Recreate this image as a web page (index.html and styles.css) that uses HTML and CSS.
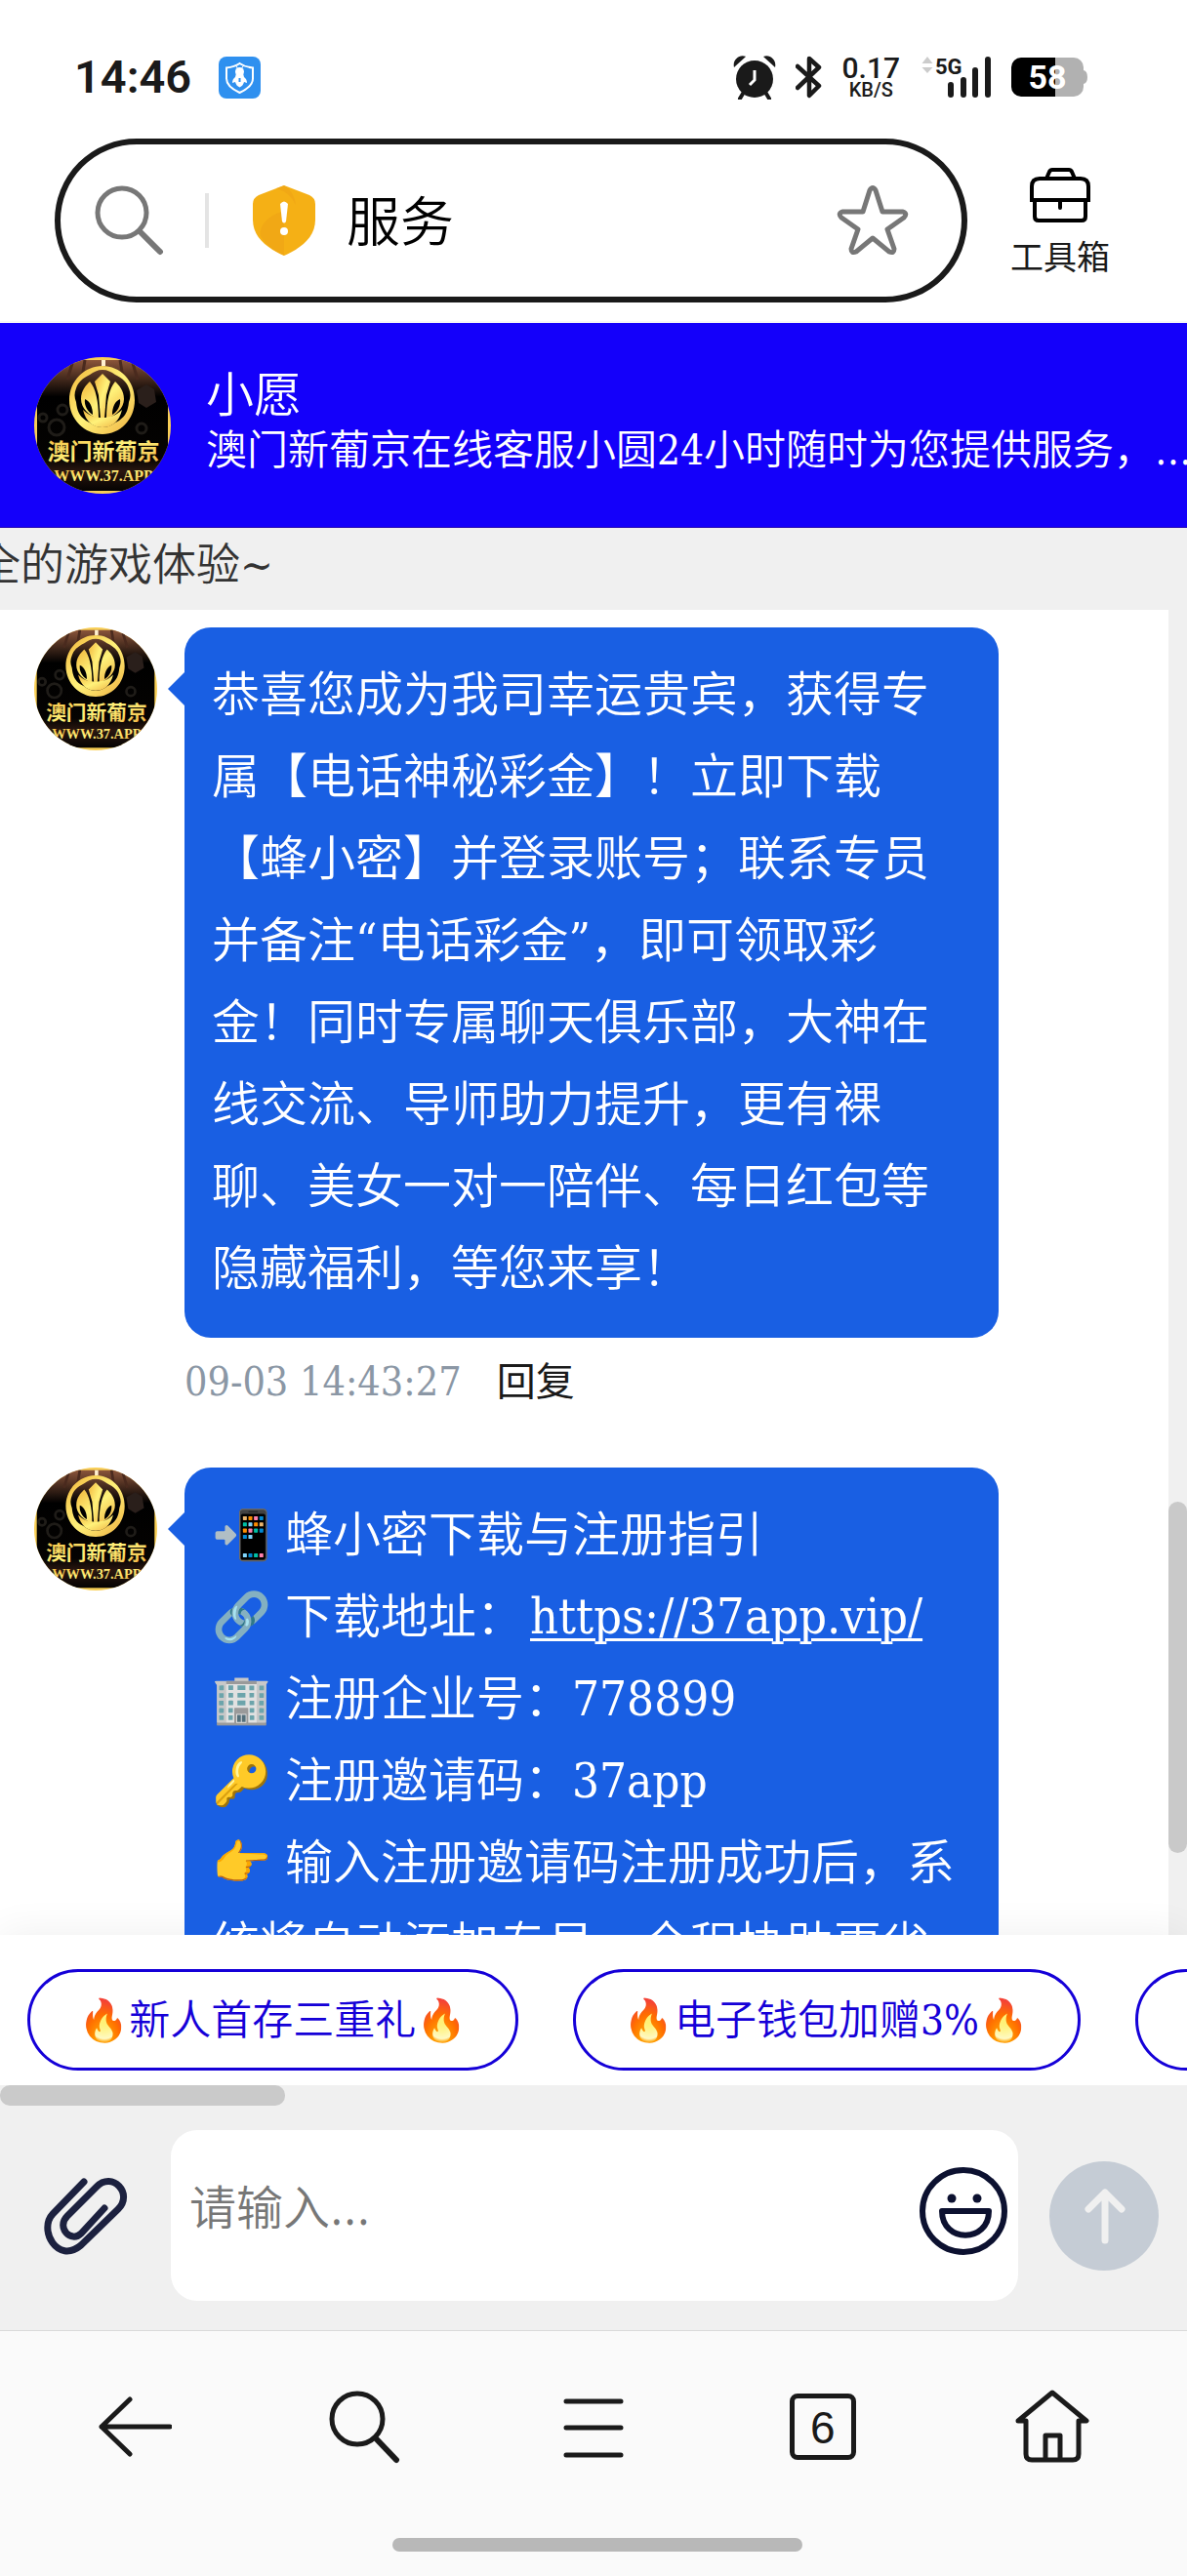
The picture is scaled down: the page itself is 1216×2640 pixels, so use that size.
FILE: index.html
```html
<!DOCTYPE html>
<html lang="zh-CN">
<head>
<meta charset="utf-8">
<meta name="viewport" content="width=device-width, initial-scale=1">
<title>服务</title>
<link rel="stylesheet" href="styles.css">
</head>
<body>
<svg class="sprite" aria-hidden="true">
  <defs>
    <linearGradient id="gold" x1="0" y1="0" x2="1" y2="1">
      <stop offset="0" stop-color="#f2b53a"/><stop offset=".5" stop-color="#fff27a"/><stop offset="1" stop-color="#efb040"/>
    </linearGradient>
    <linearGradient id="curtain" x1="0" y1="0" x2="0" y2="1">
      <stop offset="0" stop-color="#8a543a"/><stop offset=".28" stop-color="#000"/><stop offset=".75" stop-color="#050302"/><stop offset=".85" stop-color="#2a1710"/><stop offset="1" stop-color="#050302"/>
    </linearGradient>
    <clipPath id="disc"><circle cx="70" cy="70" r="70"/></clipPath>
  </defs>
  <symbol id="avatar" viewBox="0 0 140 140">
    <g clip-path="url(#disc)">
      <rect width="140" height="140" fill="#f9cf55"/>
      <rect x="3" y="3" width="134" height="134" fill="url(#curtain)"/>
      <path d="M40 3l-6 20M52 3l-3 18M88 3l3 18M100 3l6 20" stroke="#4a2a1e" stroke-width="3"/>
      <path d="M71 3v6" stroke="#fff0d0" stroke-width="4"/>
      <path d="M105 34l10-6 8 5 2 13-10 6-8-5z" fill="#2a1f1b"/>
      <g fill="none" stroke="#1f1c18" stroke-width="3"><circle cx="29" cy="54" r="5"/><circle cx="23" cy="72" r="8"/><circle cx="9" cy="62" r="4"/><circle cx="110" cy="73" r="5"/></g>
      <path fill-rule="evenodd" d="M70 9C88 9 103 24 103 44S88 79 70 79 36 64 36 44 52 9 70 9zM70 13c-5 0-9 2-13 5-8 4-12 8-14 14-2 5-2 9 0 14 1 9 3 14 10 19 6 3 9 7 17 7s11-4 17-7c7-5 9-10 10-19 2-5 2-9 0-14-2-6-6-10-14-14-4-3-8-5-13-5z" fill="url(#gold)"/>
      <path d="M70 17l8 8-4 14-2 24h-4l-2-24-4-14z" fill="url(#gold)"/>
      <path d="M57 25c6 7 9 20 9 38-10-3-18-11-18-20s5-14 9-18zM83 25c-6 7-9 20-9 38 10-3 18-11 18-20s-5-14-9-18z" fill="url(#gold)"/>
      <path d="M52 43c5 2 8 8 8 16-5-3-9-9-8-16zM88 43c-5 2-8 8-8 16 5-3 9-9 8-16z" fill="#000"/>
      <path d="M50 54c6 6 13 8 20 8s14-2 20-8c-3 12-10 18-20 18s-17-6-20-18z" fill="url(#gold)"/>
      <text x="71" y="105" text-anchor="middle" class="avatar-name" fill="url(#gold)">澳门新葡京</text>
      <text x="71" y="127" text-anchor="middle" class="avatar-site" fill="url(#gold)">WWW.37.APP</text>
    </g>
  </symbol>
</svg>

<div class="phone">
  <div class="status">
    <span class="clock">14:46</span>
    <svg class="app-badge" width="43" height="43" viewBox="0 0 43 43"><rect width="43" height="43" rx="8" fill="#2f90ef"/><path d="M21.500 7c5 3.500 9 4 13.500 4.500v11c0 7-6 11-13.500 14.500C14 33.500 8 29.500 8 22.500v-11C12.500 11 16.500 10.500 21.500 7z" fill="none" stroke="#fff" stroke-width="2"/><path d="M18 10l2 3M25 10l-2 3" stroke="#fff"/><circle cx="21.500" cy="15.500" r="4.500" fill="#fff"/><path d="M18 17h7l1 4q3 2 3 6l-3-1q-1 4-4.500 5.500Q18 30 17 26l-3 1q0-4 3-6z" fill="#fff"/><path d="M21.500 22v4" stroke="#2f90ef" stroke-width="2"/></svg>
    <div class="status-right">
      <svg width="44" height="45" viewBox="0 0 44 45"><g fill="#1a1a1a"><circle cx="22" cy="24" r="19"/><path d="M1 12C-1 4 7-2 13 1zM43 12c2-8-6-14-12-11z"/></g><path d="M10 39l-3 5M34 39l3 5" stroke="#1a1a1a" stroke-width="4" stroke-linecap="round"/><path d="M22 15v10l-5 5" stroke="#fff" stroke-width="3" fill="none"/></svg>
      <svg width="28" height="44" viewBox="0 0 28 44"><path d="M2 11l22 20-10 10V3l10 9L2 33" fill="none" stroke="#1a1a1a" stroke-width="4.500" stroke-linejoin="round" stroke-linecap="round"/></svg>
      <span class="speed"><b>0.17</b><small>KB/S</small></span>
      <svg width="72" height="44" viewBox="0 0 72 44"><path d="M6 1l5.500 7H.5zM6 18l5.500-6H.5z" fill="#ccc"/><text x="14" y="19" class="net">5G</text><path d="M30 30v10M43 25v15M55 15v25M68 4v36" stroke="#1a1a1a" stroke-width="6" stroke-linecap="round"/></svg>
      <svg width="78" height="40" viewBox="0 0 78 40"><path d="M10 0h54a10 10 0 0 1 10 10v3q4 1 4 7t-4 7v3a10 10 0 0 1-10 10H10z" fill="#b1b1b1"/><path d="M45 0H10A10 10 0 0 0 0 10v20a10 10 0 0 0 10 10h35z" fill="#000"/><text x="37" y="32" text-anchor="middle" class="charge">58</text></svg>
    </div>
  </div>

  <header class="browser">
    <div class="address">
      <svg width="72" height="72" viewBox="0 0 72 72" fill="none" stroke="#777" stroke-linecap="round"><circle cx="28" cy="28" r="25" stroke-width="5"/><path d="M46 47l21 21" stroke-width="6"/></svg>
      <span class="rule"></span>
      <svg class="shield" width="64" height="72" viewBox="0 0 64 72"><path d="M32 0l26 10q6 3 6 9v16c0 18-14 29-32 37C14 64 0 53 0 35V19q0-6 6-9z" fill="#f5b015"/><path d="M32 0l-8 3q14 4 20 17Q42 6 32 0zM30 27C14 32 6 42 8 52q8 13 24 20V28z" fill="#ee9f16" opacity=".5"/><path d="M28 19q4-5 8 0l-2 18q-2 3-4 0z" fill="#fff"/><circle cx="32" cy="47" r="4" fill="#fff"/></svg>
      <span class="page-title">服务</span>
      <button class="bare" aria-label="收藏"><svg width="74" height="74" viewBox="0 0 74 74"><path d="M34 6q3-5 6 0l7 22h21q5 2 1 6L52 46l7 20q0 5-5 3L37 55 20 69q-5 2-5-3l7-20L5 34q-4-4 1-6h21z" fill="none" stroke="#777" stroke-width="5" stroke-linejoin="round"/></svg></button>
    </div>
    <button class="bare toolbox">
      <svg width="62" height="56" viewBox="0 0 62 56" fill="none" stroke="#000" stroke-width="4"><path d="M17 11l3-7q1-2 3-2h17q2 0 3 2l3 7M2 33V19q0-8 8-8h42q8 0 8 8v14zM5 33v17q0 4 4 4h44q4 0 4-4V33M31 33v8" stroke-linecap="round"/></svg>
      <span>工具箱</span>
    </button>
  </header>

  <section class="agent">
    <svg width="140" height="140" role="img" aria-label="澳门新葡京"><use href="#avatar"/></svg>
    <div class="agent-text">
      <h1>小愿</h1>
      <p>澳门新葡京在线客服小圆24小时随时为您提供服务，…</p>
    </div>
  </section>
  <p class="notice">全的游戏体验~</p>

  <main class="chat">
    <div class="thread">
      <article class="message">
        <svg width="126" height="126" role="img" aria-label="小愿"><use href="#avatar"/></svg>
        <div class="body">
          <div class="bubble">恭喜您成为我司幸运贵宾，获得专属【电话神秘彩金】！立即下载【蜂小密】并登录账号；联系专员并备注“电话彩金”，即可领取彩金！同时专属聊天俱乐部，大神在线交流、导师助力提升，更有裸聊、美女一对一陪伴、每日红包等隐藏福利，等您来享！</div>
          <div class="meta"><time>09-03 14:43:27</time><button class="bare">回复</button></div>
        </div>
      </article>
      <article class="message">
        <svg width="126" height="126" role="img" aria-label="小愿"><use href="#avatar"/></svg>
        <div class="body">
          <div class="bubble">📲 蜂小密下载与注册指引<br>🔗 下载地址：<a href="#">https://37app.vip/</a><br>🏢 注册企业号：778899<br>🔑 注册邀请码：37app<br>👉 输入注册邀请码注册成功后，系统将自动添加专员，全程协助更省</div>
        </div>
      </article>
    </div>
    <div class="track"><div class="thumb"></div></div>
  </main>

  <div class="quick">
    <button>🔥新人首存三重礼🔥</button>
    <button>🔥电子钱包加赠3%🔥</button>
    <button aria-label="更多"></button>
  </div>

  <div class="composer">
    <div class="h-thumb"></div>
    <form class="entry">
      <button type="button" class="bare" aria-label="附件"><svg width="88" height="80" viewBox="0 0 88 80"><path d="M43 5L11 38C-4 54 16 90 40 70L78 33C94 17 72-6 56 10L26 40c-12 12 4 28 14 18l24-26" fill="none" stroke="#1c213f" stroke-width="7" stroke-linecap="round"/></svg></button>
      <div class="field">
        <input type="text" placeholder="请输入..." aria-label="请输入">
        <button type="button" class="bare" aria-label="表情"><svg width="90" height="90" viewBox="0 0 90 90"><g fill="none" stroke="#0c1130"><circle cx="45" cy="45" r="42" stroke-width="6"/><path d="M23 45h48c0 33-48 33-48 0z" stroke-width="6" stroke-linejoin="round"/></g><circle cx="33" cy="32" r="4.500" fill="#0c1130"/><circle cx="59" cy="32" r="4.500" fill="#0c1130"/></svg></button>
      </div>
      <button type="button" class="bare" aria-label="发送"><svg width="112" height="112" viewBox="0 0 112 112"><circle cx="56" cy="56" r="56" fill="#c5ccd5"/><path d="M57 81V32M40 49l17-17 17 17" fill="none" stroke="#f0f0f0" stroke-width="7" stroke-linecap="round" stroke-linejoin="round"/></svg></button>
    </form>
  </div>

  <nav class="toolbar">
    <button class="bare" aria-label="返回"><svg width="76" height="76" viewBox="0 0 76 76"><path d="M33 10L4 38l29 28M4 38h70" fill="none" stroke="#1a1a1a" stroke-width="5" stroke-linecap="round" stroke-linejoin="round"/></svg></button>
    <button class="bare" aria-label="搜索"><svg width="76" height="76" viewBox="0 0 76 76" fill="none" stroke="#1a1a1a" stroke-linecap="round"><circle cx="31" cy="30" r="26" stroke-width="5"/><path d="M50 50l21 22" stroke-width="6"/></svg></button>
    <button class="bare" aria-label="菜单"><svg width="76" height="76" viewBox="0 0 76 76"><path d="M10 12h56M10 39h56M10 67h56" stroke="#1a1a1a" stroke-width="5" stroke-linecap="round"/></svg></button>
    <button class="bare" aria-label="标签页"><span class="tabs">6</span></button>
    <button class="bare" aria-label="主页"><svg width="76" height="76" viewBox="0 0 76 76"><path d="M11 32H3L38 3l35 29h-8v34q0 6-6 6H17q-6 0-6-6zM31 72V47h15v25" fill="none" stroke="#1a1a1a" stroke-width="5" stroke-linejoin="round"/></svg></button>
  </nav>
  <div class="gesture"><span></span></div>
</div>
</body>
</html>
```
FILE: styles.css
```css
* { box-sizing: border-box; margin: 0; padding: 0; }
body {
  background: #fff;
  color: #1a1a1a;
  font-family: "DejaVu Serif Condensed", "Noto Sans CJK SC", "Noto Color Emoji", serif;
  font-weight: 350;
  text-spacing-trim: space-all;
}
svg { display: block; flex: none; }
.sprite { width: 0; height: 0; position: absolute; }
button, input { font: inherit; color: inherit; }
.bare { background: none; border: 0; }
.avatar-name { font: 700 23px "Noto Sans CJK SC", sans-serif; }
.avatar-site { font: 700 16px "Liberation Serif", serif; }

.phone { height: 100vh; display: flex; flex-direction: column; overflow: hidden; }
.phone > * { flex: none; }

.status {
  height: 142px;
  padding: 16px 102px 0 76px;
  display: flex;
  align-items: center;
  font-family: Roboto, sans-serif;
}
.clock { font-size: 47px; font-weight: 600; width: 148px; line-height: 48px; }
.status-right { margin-left: auto; display: flex; align-items: center; gap: 20px; }
.speed { display: flex; flex-direction: column; align-items: center; margin-right: 2px; }
.speed b { font-size: 30px; line-height: 26px; font-weight: 500; }
.speed small { font-size: 20px; line-height: 18px; font-weight: 500; }
.net { font: 700 22px Roboto, sans-serif; fill: #1a1a1a; }
.charge { font: 700 34px Roboto, sans-serif; fill: #fff; }

.browser {
  display: flex;
  align-items: center;
  gap: 44px;
  padding: 0 79px 19px 56px;
  border-bottom: 2px solid #f7f7f7;
}
.address {
  flex: 1;
  height: 168px;
  border: 6px solid #1a1a1a;
  border-radius: 84px;
  display: flex;
  align-items: center;
  padding: 0 54px 0 35px;
}
.rule { width: 4px; height: 56px; background: #e4e4e4; margin: 0 45px 0 41px; }
.shield { margin-right: 32px; }
.page-title { flex: 1; font-size: 55px; line-height: 72px; padding-top: 4px; color: #000; }
.toolbox { font-size: 34px; line-height: 40px; font-weight: 400; display: flex; flex-direction: column; align-items: center; gap: 16px; padding-top: 4px; }

.agent { background: #1400fa; color: #fff; height: 210px; padding: 0 0 4px 35px; display: flex; align-items: center; gap: 36px; border-bottom: 1px solid #2408b0; }
.agent > svg { margin-top: 4px; }
.agent-text { min-width: 0; }
.agent h1 { font-size: 49px; line-height: 56px; font-weight: 350; }
.agent p { font-size: 42px; line-height: 56px; white-space: nowrap; }
.notice { height: 84px; line-height: 77px; font-size: 45px; color: #333; background: #f0f0f0; text-indent: -24px; white-space: nowrap; overflow: hidden; }

.phone > .chat { flex: 1; min-height: 0; display: flex; overflow: hidden; }
.thread { flex: 1; padding: 18px 0 0 35px; }
.track { width: 19px; background: #f0f0f0; padding-top: 914px; }
.thumb { height: 360px; border-radius: 10px; background: #c9c9c9; }
.message { display: flex; gap: 28px; align-items: flex-start; padding-right: 174px; margin-bottom: 52px; }
.body { flex: 1; }
.bubble { position: relative; background: #195fe3; color: #fff; border-radius: 27px; padding: 28px 32px 28px 28px; font-size: 49px; line-height: 84px; }
.bubble::before {
  content: "";
  position: absolute;
  left: -17px;
  top: 46px;
  border: 17px solid transparent;
  border-right-color: #195fe3;
  border-left: 0;
}
.bubble a { color: inherit; margin-left: 6px; font-size: 50px; line-height: 80px; text-decoration-thickness: 3px; text-underline-offset: 5px; }
.meta { display: flex; gap: 36px; padding-top: 9px; font-size: 41px; line-height: 72px; }
.meta time { color: #8b97a5; }
.meta button { font-size: 40px; font-weight: 400; }

.quick { background: #fff; height: 154px; padding: 35px 0 0 28px; display: flex; gap: 56px; overflow: hidden; box-shadow: 0 0 40px rgba(0, 0, 0, .07); }
.quick button { flex: none; min-width: 400px; height: 104px; border: 3px solid #1500d8; border-radius: 52px; padding: 0 49px 8px; background: none; color: #1500d8; font-size: 42px; white-space: nowrap; }

.composer { background: #f0f0f0; border-bottom: 1px solid #dadada; height: 252px; }
.h-thumb { width: 24%; height: 21px; border-radius: 10px; background: #cacaca; }
.entry { display: flex; align-items: center; gap: 32px; padding: 25px 29px 30px 43px; }
.entry > button:first-child { margin-right: 12px; }
.field { flex: 1; height: 175px; background: #fff; border-radius: 27px; display: flex; align-items: center; padding: 0 11px 10px 19px; }
.field input { flex: 1; min-width: 0; border: 0; outline: 0; background: none; font-size: 48px; padding-bottom: 6px; }
.field input::placeholder { color: #777; opacity: 1; }

.toolbar { background: #fafafa; height: 196px; padding: 0 21px; display: grid; grid-template-columns: repeat(5, 1fr); place-items: center; }
.tabs { display: block; width: 68px; height: 68px; border: 5px solid #1a1a1a; border-radius: 8px; font: 400 46px/60px "Liberation Sans", sans-serif; color: #1a1a1a; text-align: center; }
.gesture { background: #fafafa; height: 55px; padding: 16px 0 0 8px; }
.gesture span { display: block; width: 420px; height: 14px; border-radius: 7px; background: #b8b8b8; margin: 0 auto; }
```
